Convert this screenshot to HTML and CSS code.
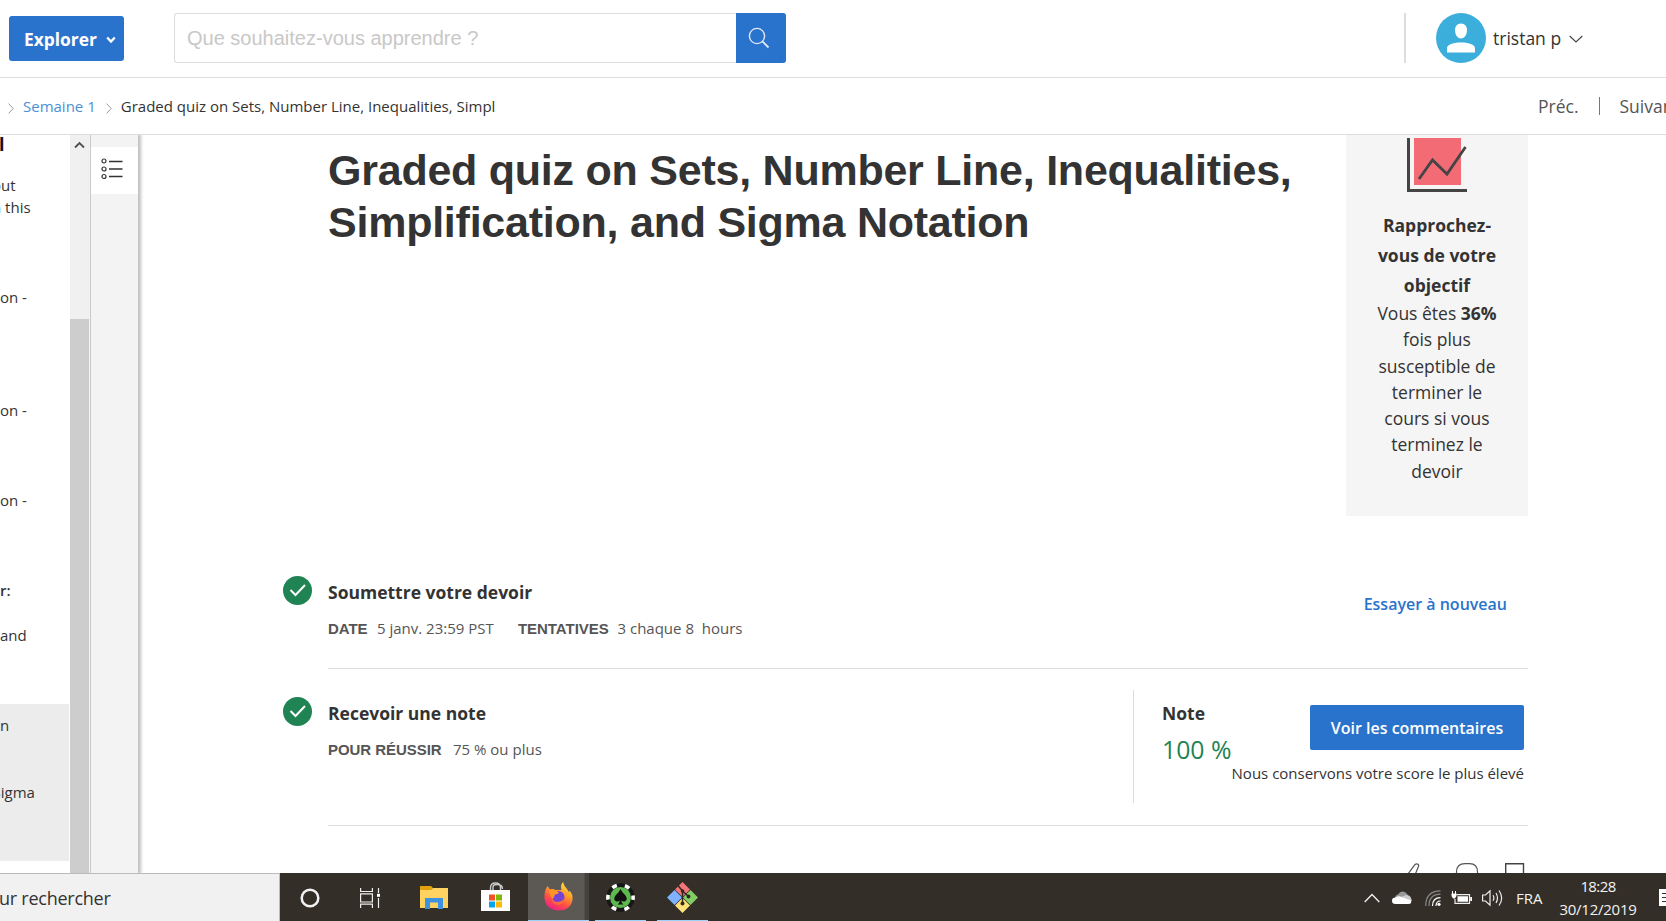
FILE: index.html
```html
<!DOCTYPE html>
<html lang="fr">
<head>
<meta charset="utf-8">
<title>Graded quiz</title>
<link rel="stylesheet" href="styles.css">
</head>
<body>
<header class="topbar">
  <button class="explore">Explorer
    <svg width="10" height="8" viewBox="0 0 10 8"><path d="M1.2 1.5 5 5.5 8.8 1.5" fill="none" stroke="#fff" stroke-width="2.3"/></svg>
  </button>
  <div class="search">
    <span class="placeholder">Que souhaitez-vous apprendre ?</span>
    <span class="search-btn"><svg width="22" height="22" viewBox="0 0 22 22" fill="none" stroke="#dfe7f3" stroke-width="1.4"><circle cx="9" cy="9" r="7.6"/><path d="M14.4 14.4 20.5 20.5" stroke-width="1.8"/></svg></span>
  </div>
  <div class="user">
    <svg class="avatar" width="50" height="50" viewBox="0 0 50 50"><circle cx="25" cy="25" r="25" fill="#3caedb"/><path fill="#fff" d="M25 10.500c4 0 6 3 6 6.500 0 4.500-2.400 8.500-6 8.500s-6-4-6-8.500c0-3.500 2-6.500 6-6.500zM11 39.500v-4.500c0-3 5-5.500 14-5.500s14 2.500 14 5.500v4.500z"/></svg>
    <span class="username">tristan p</span>
    <svg width="14" height="8" viewBox="0 0 14 8"><path d="M.7 1 7 7 13.300 1" fill="none" stroke="#444" stroke-width="1.100"/></svg>
  </div>
</header>
<nav class="crumbs">
  <svg width="6" height="11" viewBox="0 0 6 11"><path d="M.6.6 5.200 5.500.6 10.400" fill="none" stroke="#999"/></svg>
  <a class="crumb-link">Semaine 1</a>
  <svg width="6" height="11" viewBox="0 0 6 11"><path d="M.6.6 5.200 5.500.6 10.400" fill="none" stroke="#999"/></svg>
  <span class="crumb-here">Graded quiz on Sets, Number Line, Inequalities, Simpl</span>
  <span class="pager"><span>Préc.</span><i class="pager-line"></i><span class="next">Suivant</span></span>
</nav>
<div class="page">
  <aside class="lessons">
    <div class="lesson-head"><span class="cut-l">l</span></div>
    <div class="rows r1"><span class="cut-o">out</span></div>
    <div class="rows r4"><span class="cut-n">n this</span></div>
    <div class="rows r5">on -</div>
    <div class="rows r4">on -</div>
    <div class="rows r4">on -</div>
    <div class="rows r2 strong">r:</div>
    <div class="rows last">and</div>
    <div class="selected">
      <div class="rows r3">n</div>
      <div class="rows r1"><span class="cut-s">Sigma</span></div>
    </div>
  </aside>
  <div class="scrollbar">
    <svg width="11" height="8" viewBox="0 0 11 8"><path d="M1 6.500 5.500 2 10 6.500" fill="none" stroke="#505050" stroke-width="1.800"/></svg>
    <div class="thumb"></div>
  </div>
  <div class="rail"><div class="rail-tab">
    <svg width="22" height="22" viewBox="0 0 22 22" fill="none" stroke="#333" stroke-width="1.200"><circle cx="3" cy="3" r="2"/><circle cx="3" cy="11" r="2"/><circle cx="3" cy="18.500" r="2"/><path d="M8 3.500H21.500M8 11H21.500M8 18.500H21.500" stroke-width="1.300"/></svg>
  </div></div>
  <main class="content">
    <section class="hero">
      <h1>Graded quiz on Sets, Number Line, Inequalities,<br>Simplification, and Sigma Notation</h1>
      <div class="goal">
        <svg width="60" height="58" viewBox="0 0 60 58"><path fill="#f36c75" d="M7 0h47v47H7z"/><path fill="none" stroke="#444" stroke-width="3" d="M1.500 0v52.500H60"/><path fill="none" stroke="#444" stroke-width="2.800" d="M12 41 25.500 22 40 36 58.500 9"/></svg>
        <div class="goal-title">Rapprochez-<br>vous de votre<br>objectif</div>
        <div class="goal-text">Vous êtes <b>36%</b><br>fois plus<br>susceptible de<br>terminer le<br>cours si vous<br>terminez le<br>devoir</div>
      </div>
    </section>
    <section class="step step-submit">
      <svg class="check" width="29" height="29" viewBox="0 0 29 29"><circle cx="14.500" cy="14.500" r="14.500" fill="#1f8354"/><path d="M7.500 14 12.500 19 22 9" fill="none" stroke="#fff" stroke-width="2"/></svg>
      <div class="step-body">
        <div class="step-info">
          <h2>Soumettre votre devoir</h2>
          <p class="meta"><b class="w-date">DATE</b><span class="w-when">5 janv. 23:59 PST</span><b class="w-tries">TENTATIVES</b><span class="w-hours">3 chaque 8&nbsp; hours</span></p>
        </div>
        <a class="retry">Essayer à nouveau</a>
      </div>
    </section>
    <section class="step step-grade">
      <svg class="check" width="29" height="29" viewBox="0 0 29 29"><circle cx="14.500" cy="14.500" r="14.500" fill="#1f8354"/><path d="M7.500 14 12.500 19 22 9" fill="none" stroke="#fff" stroke-width="2"/></svg>
      <div class="step-body">
        <div class="step-info">
          <h2>Recevoir une note</h2>
          <p class="meta"><b class="w-pass">POUR RÉUSSIR</b><span class="w-rate">75 % ou plus</span></p>
        </div>
        <div class="grade">
          <div class="grade-row">
            <div><h2>Note</h2><div class="score">100 %</div></div>
            <button class="feedback">Voir les commentaires</button>
          </div>
          <div class="kept">Nous conservons votre score le plus élevé</div>
        </div>
      </div>
    </section>
    <div class="reactions">
      <svg width="120" height="12" viewBox="0 0 120 12" fill="none" stroke="#555" stroke-width="1.200"><path d="M1 11 8 1.500Q9.500.2 11 1.200 12.200 2.200 11.300 3.800L8 12M49.500 12V9Q49.500.7 58 .7H62.500Q70.500.7 70.500 9V12"/><path d="M98.700 12V.7H116.500V12" stroke="#444" stroke-width="1.400"/></svg>
    </div>
  </main>
</div>
<footer class="taskbar">
  <div class="task-search"><span>ur rechercher</span></div>
  <div class="app"><svg width="20" height="20" viewBox="0 0 20 20"><circle cx="10" cy="10" r="8.300" fill="none" stroke="#f2f2f2" stroke-width="2.500"/></svg></div>
  <div class="app view"><svg width="20" height="20" viewBox="0 0 20 20" fill="none" stroke="#eee" stroke-width="1.200"><path d="M.6 0V3.500H12.400V0M.6 5.800H12.400V14H.6zM.6 20V16.200H12.400V20M18.500 0V5M18.500 10V20"/><path d="M17 5.800h3v3h-3z" fill="#fff" stroke="none"/></svg></div>
  <div class="app folder"><svg width="28" height="24" viewBox="0 0 28 24"><path fill="#e2a00d" d="M0 0H11L14 3H18V6H0z"/><path fill="#ffd262" d="M0 4H11L13.500 2H28V22H0z"/><path fill="#3d93df" d="M5 12H23V23H18V16.500H10V23H5z"/></svg></div>
  <div class="app store"><svg width="29" height="30" viewBox="0 0 29 30"><path d="M9.500 9V6Q9.500 1 14.500 1T19.500 6V9M12 8V5Q12 2.500 16 2.500 21.500 2.500 21.500 7" fill="none" stroke="#ccc" stroke-width="1.400"/><path fill="#fff" d="M0 8H29V29H0z"/><path fill="#f25022" d="M8 12.500h6v6H8z"/><path fill="#7fba00" d="M15 12.500h6v6h-6z"/><path fill="#00a4ef" d="M8 19.500h6v6H8z"/><path fill="#ffb900" d="M15 19.500h6v6h-6z"/></svg></div>
  <div class="app active"><svg width="29" height="29" viewBox="0 0 29 29">
    <defs><linearGradient id="fox" x1=".8" y1="0" x2=".3" y2="1"><stop offset="0" stop-color="#ffe84a"/><stop offset=".4" stop-color="#ff9a28"/><stop offset=".7" stop-color="#ff4a45"/><stop offset="1" stop-color="#e8218c"/></linearGradient></defs>
    <path fill="url(#fox)" d="M3.500 4 6 7.500Q9 6.500 11 8Q14.500 8 17.500 8Q16 3 19 0Q20 4 23 7Q24.500 9 25 10.500L25.500 8.500Q29 12 28.500 17.500 27 28 14.500 28.500 2 28 .5 16.500 0 9 3.500 4z"/><circle cx="14.500" cy="15" r="6" fill="#7643d5"/><path fill="#ff9529" d="M5 8Q9 6 11 8L15 10.500Q14 12.500 11 12.500L9 17Q6 15 5 8z"/><path fill="#ff693a" d="M7 15Q9 20.500 14 20 18 19.500 20 17 19 23 13.500 23 8 22 7 15z"/></svg></div>
  <div class="app running chip"><svg width="29" height="29" viewBox="0 0 29 29"><circle cx="14.500" cy="14.500" r="14.300" fill="#171717"/><circle cx="14.500" cy="14.500" r="12.600" fill="none" stroke="#fff" stroke-width="3.600" stroke-dasharray="5 8.195" stroke-dashoffset="2.500"/><circle cx="14.500" cy="14.500" r="10.500" fill="#5cb84f"/><path fill="#111" d="M14.500 6Q16 9.500 19.500 12.500 22 16 19.500 18 17 19.300 15.200 17.500 15.500 20 17.500 21.500H11.500Q13.500 20 13.800 17.500 12 19.300 9.500 18 7 16 9.500 12.500 13 9.500 14.500 6z"/></svg></div>
  <div class="app running git"><svg width="31" height="31" viewBox="0 0 31 31"><path fill="#f5767a" d="M15.500 0 23 7.500 15.500 15 8 7.500z"/><path fill="#7fb2ff" d="M7.500 8 15 15.500 7.500 23 0 15.500z"/><path fill="#82cf63" d="M23.500 8 31 15.500 23.500 23 16 15.500z"/><path fill="#ffe17a" d="M15.500 16 23 23.500 15.500 31 8 23.500z"/><path d="M11 3.500 15.500 9V22M15.500 9 22 15" fill="none" stroke="#302820" stroke-width="1.500"/><circle cx="15.500" cy="9" r="1.800" fill="#302820"/><circle cx="21.500" cy="14.500" r="1.900" fill="#302820"/><circle cx="15.500" cy="21.500" r="2" fill="#302820"/></svg></div>
  <div class="tray">
    <svg width="16" height="10" viewBox="0 0 16 10"><path d="M.7 9 8 1.500 15.300 9" fill="none" stroke="#eee" stroke-width="1.400"/></svg>
    <svg class="t-cloud" width="20" height="13" viewBox="0 0 20 13"><path fill="#999" d="M3 7Q3 4 6 3.500 9-1 13.500 1.500 16 3 16 5L9 8z"/><path fill="#ccc" d="M9 6 14 4Q18 4 19 7L20 10 12 9z"/><path fill="#fff" d="M3.500 13Q0 13 0 9.800 0 6.500 3.500 6.500 7 4 10 6.200L19 9.500Q20 13 16.500 13z"/></svg>
    <svg class="t-wifi" width="16" height="16" viewBox="0 0 16 16" fill="none" stroke-width="1.200"><path stroke="#888" d="M.7 16Q.7 1 15.500.8M4 16Q4 4.300 15.500 4.200"/><path stroke="#fff" d="M7.500 16Q7.500 7.700 15.500 7.600M11 16Q11 11 15.500 11"/><circle cx="14" cy="14.300" r="1.600" fill="#fff"/></svg>
    <svg class="t-batt" width="21" height="14" viewBox="0 0 21 14"><path d="M5.500 3.600H18.500V12.400H4V8" fill="none" stroke="#eee" stroke-width="1.200"/><path fill="#fff" d="M6.500 5.300H17V10.800H6.500zM19.200 6H21v4h-1.800zM.5 2.500H5.500V5L4 7.500H2L.5 5zM1 0H2V3H1zM4 0H5V3H4z"/></svg>
    <svg class="t-vol" width="21" height="18" viewBox="0 0 21 18" fill="none" stroke="#eee" stroke-width="1.200"><path d="M.6 6H3.500L8 1.800V16.200L3.500 12H.6zM11 6.200Q12.800 9 11 11.800M14 4Q17 9 14 14M17 1.500Q22.300 9 17 16.500"/></svg>
    <span class="lang">FRA</span>
    <div class="clock"><span class="time">18:28</span><span>30/12/2019</span></div>
    <svg class="t-note" width="7" height="17" viewBox="0 0 7 17"><path fill="#fff" d="M0 0h7v17H0z"/><path stroke="#333" d="M3 4.500h4M3 8.500h4M3 12.500h4"/></svg>
  </div>
</footer>
</body>
</html>
```

FILE: styles.css
```css
* { box-sizing: border-box; }
body { margin: 0; width: 1666px; height: 921px; overflow: hidden; display: flex; flex-direction: column; background: #fff; color: #333; font-family: "Open Sans", "Noto Sans", sans-serif; }
h1, h2, p { margin: 0; }
button { border: 0; padding: 0; font-family: inherit; color: #fff; background: #2a73cc; }
svg { display: block; flex: none; }
span, a, b { white-space: nowrap; }

.topbar { height: 78px; flex: none; border-bottom: 1px solid #ddd; display: flex; align-items: flex-start; padding-left: 9px; }
.explore { width: 115px; height: 45px; margin-top: 16px; border-radius: 3px; font-size: 17.400px; font-weight: 700; display: flex; align-items: center; padding-left: 15px; gap: 9px; }
.explore svg { margin-top: 3px; }
.search { display: flex; width: 612px; height: 50px; margin: 13px 0 0 50px; border: 1px solid #ddd; border-right: 0; border-radius: 3px; }
.placeholder { flex: 1; padding-left: 12px; font: 20px/48px "Liberation Sans", sans-serif; color: #c8c8c8; }
.search-btn { width: 50px; height: 50px; margin-top: -1px; background: #2a73cc; border-radius: 0 3px 3px 0; padding: 14px 0 0 12px; }
.user { margin: 13px 0 0 618px; height: 50px; border-left: 2px solid #ddd; padding-left: 30px; display: flex; align-items: center; }
.username { font-size: 17.500px; margin: 0 8px 0 7px; }
.user svg:last-child { margin-top: 2px; }

.crumbs { height: 57px; flex: none; border-bottom: 1px solid #ddd; display: flex; align-items: center; padding: 0 0 0 8px; font-size: 15px; }
.crumbs > svg { margin-top: 4px; }
.crumb-link { color: #4c8fd6; margin: 0 10px 0 9px; }
.crumb-here { margin-left: 9px; }
.pager { margin-left: auto; width: 128px; flex: none; display: flex; align-items: center; font-size: 17.500px; color: #555; }
.pager-line { width: 1px; height: 18px; background: #777; margin: 0 20px; flex: none; }

.page { height: 738px; flex: none; display: flex; overflow: hidden; }
.lessons { width: 70px; overflow: hidden; font-size: 15px; line-height: 22.500px; flex: none; }
.lesson-head { height: 38.500px; font-size: 18px; font-weight: 700; line-height: 18px; color: #111; }
.rows { height: 22.500px; }
.r2 { height: 45px; }
.r3 { height: 67px; }
.r4 { height: 90px; }
.r5 { height: 112.500px; }
.last { height: 80.500px; }
.strong { font-weight: 600; }
.cut-l { margin-left: -1px; }
.cut-o { margin-left: -8px; }
.cut-n { margin-left: -8px; }
.cut-s { margin-left: -7.500px; }
.selected { width: 69px; height: 157px; background: #ececec; padding-top: 10px; }
.scrollbar { width: 19px; background: #f0f0f0; flex: none; padding-top: 6px; }
.scrollbar svg { margin-left: 4px; }
.thumb { margin-top: 170px; height: 560px; background: #cdcdcd; }
.rail { width: 48px; margin-left: 1px; border-left: 1px solid #c8c8c8; background: #f3f3f3; box-shadow: 2px 0 3px 1px #c0c0c0; flex: none; padding-top: 12px; }
.rail-tab { height: 47px; background: #fff; padding: 11px 0 0 10px; }

.content { width: 1390px; padding-left: 145px; flex: none; }
.hero { height: 441px; display: flex; margin-left: 45px; }
h1 { width: 1018px; flex: none; padding-top: 9px; font: 700 43px/52px "Liberation Sans", sans-serif; letter-spacing: -.24px; color: #333; }
.goal { width: 182px; height: 381px; background: #f5f5f5; text-align: center; display: flex; flex-direction: column; align-items: center; padding-top: 3px; font-size: 17.500px; }
.goal-title { font-weight: 700; line-height: 30px; margin-top: 14px; }
.goal-text { line-height: 26.300px; }
.step { display: flex; gap: 15.500px; }
.check { margin-left: -.5px; margin-right: 1px; }
.step-body { flex: 1; display: flex; justify-content: space-between; border-bottom: 1px solid #ddd; }
.step-submit .step-body { height: 93px; }
.step-grade { margin-top: 22px; height: 135px; }
.step-grade .check { margin-top: 6px; }
h2 { font-size: 17.500px; line-height: 24px; font-weight: 700; }
.step-info h2 { margin-top: 4px; }
.step-grade .step-info h2 { margin-top: 10px; }
.meta { display: flex; margin-top: 12px; font-size: 15px; line-height: 24px; color: #555; }
.meta b { font: 700 15px/25px "Liberation Sans", sans-serif; letter-spacing: -.05px; }
.w-date { width: 49px; }
.w-when { width: 141px; }
.w-tries { width: 99.500px; }
.w-pass { width: 125px; }
.retry { color: #2a73cc; font-size: 16px; font-weight: 600; line-height: 24px; margin: 16px 21px 0 0; }
.grade { width: 395px; height: 113px; margin-top: -1px; border-left: 1px solid #ddd; padding: 11px 4px 0 28px; }
.grade-row { display: flex; justify-content: space-between; height: 60px; }
.score { color: #1f8354; font-size: 24.800px; line-height: 34px; margin-top: 7px; }
.feedback { width: 214px; height: 45px; margin-top: 4px; border-radius: 2px; font-size: 16px; font-weight: 600; }
.kept { font-size: 15px; line-height: 24px; text-align: right; }
.reactions { margin: 37px 0 0 1124px; }

.taskbar { height: 48px; flex: none; background: #332e28; display: flex; color: #f2f2f2; }
.task-search { width: 280px; background: #f1f1f1; border: 1px solid #bbb; border-width: 1px 1px 0 0; color: #333; font-size: 18px; letter-spacing: -.25px; line-height: 48px; }
.task-search span { margin-left: -1px; }
.app { width: 62px; display: flex; align-items: center; justify-content: center; border-bottom: 1px solid transparent; flex: none; padding: 3px 2px 0 0; }
.view { padding: 2px 6px 0 0; }
.store { padding: 0 3px 0 0; }
.active { width: 61px; background: linear-gradient(90deg, #5c5955 56px, #45413b 57px); border-color: #9bd2f5; padding: 0 1px 0 0; }
.active svg { margin-top: -1px; }
.running { width: 51px; border-color: #9bd2f5; padding: 2px 1px 0 0; }
.chip { margin-left: 6px; }
.git { margin-left: 11px; }
.tray { margin-left: auto; width: 302px; display: flex; align-items: center; flex: none; padding-top: 1px; }
.t-cloud { margin-left: 12px; }
.t-wifi { margin-left: 13px; }
.t-batt { margin-left: 10px; }
.t-vol { margin-left: 10px; }
.lang { width: 27px; margin-left: 13px; font-size: 15px; }
.clock { width: 76px; margin-left: 17px; font-size: 15px; letter-spacing: -.25px; line-height: 23px; display: flex; flex-direction: column; align-items: center; }
.time { letter-spacing: -.6px; }
.t-note { margin-left: auto; }
```
